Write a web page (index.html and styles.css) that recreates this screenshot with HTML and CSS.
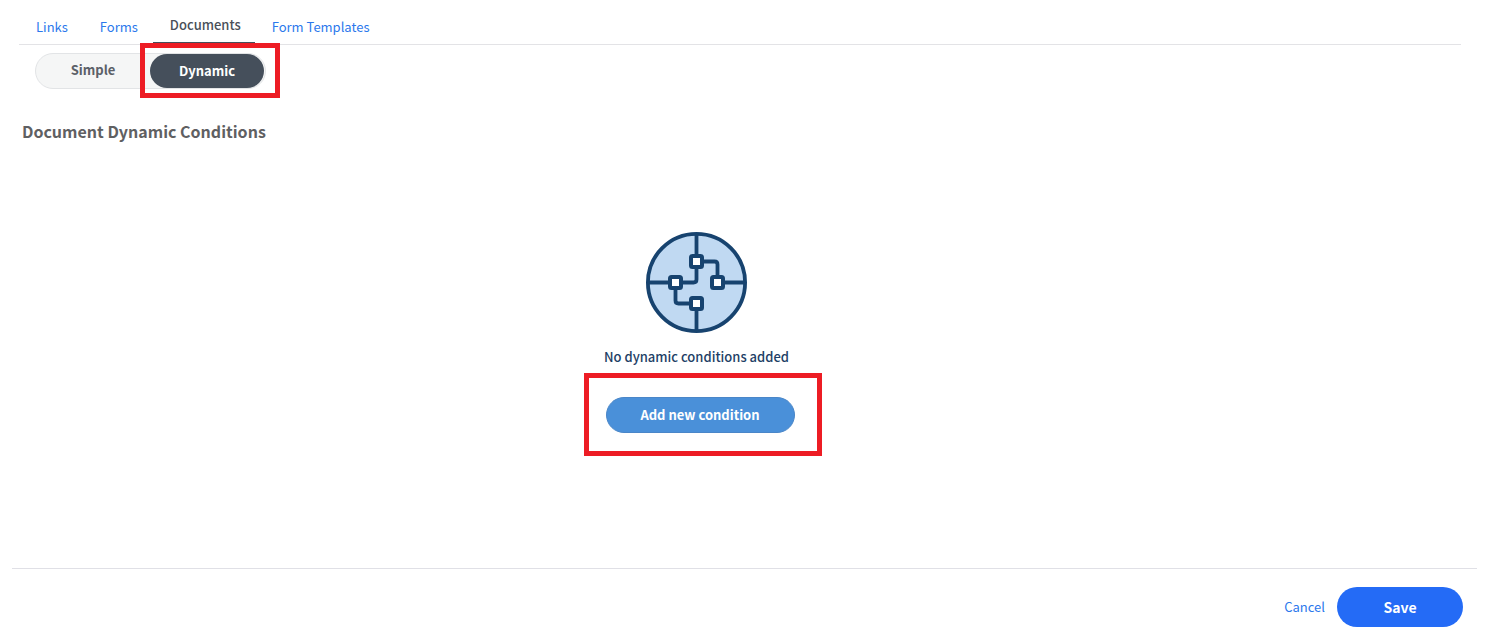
FILE: index.html
```html
<!DOCTYPE html>
<html lang="en">
<head>
<meta charset="utf-8">
<title>Document Dynamic Conditions</title>
<link rel="stylesheet" href="styles.css">
</head>
<body>
<div class="page">
  <nav class="tabs">
    <a class="tab">Links</a>
    <a class="tab">Forms</a>
    <a class="tab tab-active">Documents</a>
    <a class="tab">Form Templates</a>
  </nav>
  <div class="toggle">
    <button class="toggle-item">Simple</button>
    <button class="toggle-item toggle-on">Dynamic</button>
    <span class="mark mark-toggle"></span>
  </div>
  <h2 class="title">Document Dynamic Conditions</h2>
  <section class="empty">
    <svg class="empty-icon" width="104" height="104" viewBox="0 0 104 104" fill="none" stroke="#17436f" stroke-width="3.8">
      <circle cx="51.5" cy="51.5" r="48.6" fill="#c0d9f2"/>
      <path d="M51.5 3V26M3 51.5H26M77 51.5H100M51.5 77V100"/>
      <path d="M51.5 36V48.5Q51.5 51.5 48.5 51.5H36"/>
      <path d="M57 30.5H69.5Q72.5 30.5 72.5 33.5V46"/>
      <path d="M30.5 57V69.5Q30.5 72.5 33.5 72.5H46"/>
      <g fill="#fff" stroke-width="4">
        <rect x="46" y="25" width="11" height="11" rx="1.5"/>
        <rect x="25" y="46" width="11" height="11" rx="1.5"/>
        <rect x="67" y="46" width="11" height="11" rx="1.5"/>
        <rect x="46" y="67" width="11" height="11" rx="1.5"/>
      </g>
    </svg>
    <p class="empty-text">No dynamic conditions added</p>
    <div class="add-wrap">
      <button class="add-btn">Add new condition</button>
      <span class="mark mark-add"></span>
    </div>
  </section>
  <footer class="footer">
    <a class="cancel">Cancel</a>
    <button class="save">Save</button>
  </footer>
</div>
</body>
</html>
```
FILE: styles.css
```css
* { box-sizing: border-box; }
html, body { margin: 0; height: 100%; background: #fff; overflow: hidden; }
body { font-family: "Noto Sans CJK SC", "Noto Sans", sans-serif; font-size: 13px; }
.page { display: flex; flex-direction: column; height: 638px; }
button { font-family: inherit; cursor: pointer; }

.tabs { display: flex; align-items: stretch; height: 45px; margin: 0 28px 0 19px; padding-left: 1px; border-bottom: 1px solid #e3e3e6; }
.tab { display: flex; align-items: flex-end; padding: 0 16px 8px; color: #2b78ec; font-size: 13px; line-height: 18px; white-space: nowrap; }
.tab-active { position: relative; color: #4a5059; font-weight: 500; padding: 0 15px 10px 16px; }
.tab-active::after { content: ""; position: absolute; left: -1px; right: 1px; bottom: -1px; height: 3px; background: #454f5b; }

.toggle { position: relative; display: flex; align-items: center; width: 231px; height: 36px; margin: 8px 0 0 35px; padding-right: 1px; border: 1px solid #e2e4e6; border-radius: 18px; background: #f5f6f6; }
.toggle-item { flex: 1; height: 34px; border: 0; background: transparent; color: #5b6068; font-size: 13px; font-weight: 700; padding: 0 0 4px; }
.toggle-on { flex: 0 0 114px; border-radius: 17px; background: #454f5b; color: #fff; padding: 0 0 2px; }
.mark { position: absolute; border: 5px solid #ed1c24; pointer-events: none; }
.mark-toggle { left: 104px; top: -11px; width: 140px; height: 55px; }

.title { margin: 31px 0 0 22px; color: #5f6062; font-size: 16px; line-height: 22px; font-weight: 700; }

.empty { display: flex; flex-direction: column; align-items: center; margin: 89px 96px 0 0; }
.empty-icon { display: block; }
.empty-text { margin: 13px 0 0; color: #1e3f66; font-size: 13px; line-height: 18px; font-weight: 500; }
.add-wrap { position: relative; margin: 31px 0 0 7px; }
.add-btn { display: block; width: 189px; height: 36px; border: 1px solid #4a86c8; border-radius: 18px; background: #4a90d9; color: #fff; font-size: 13px; font-weight: 700; padding: 0 0 1px; }
.mark-add { left: -22px; top: -24px; width: 238px; height: 83px; }

.footer { display: flex; align-items: center; justify-content: flex-end; gap: 12px; height: 70px; margin: auto 12px 0; padding: 18px 14px 12px 0; border-top: 1px solid #e0e0e6; }
.cancel { color: #2b78ec; font-size: 13px; line-height: 18px; }
.save { width: 126px; height: 40px; border: 0; border-radius: 20px; background: #246bf6; color: #fff; font-size: 14px; font-weight: 700; padding: 0; }
```
